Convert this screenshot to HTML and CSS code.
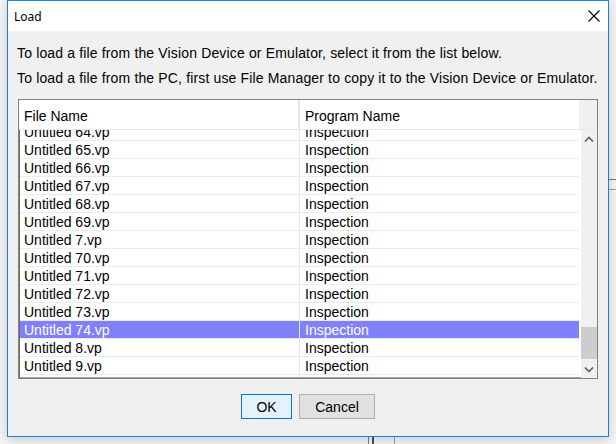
FILE: index.html
```html
<!DOCTYPE html>
<html>
<head>
<meta charset="utf-8">
<link rel="stylesheet" href="styles.css">
</head>
<body>
<div class="desk">
  <div class="bg-hline bg-hline-1"></div>
  <div class="bg-hline bg-hline-2"></div>
  <div class="bg-vline bg-vline-1"></div>
  <div class="bg-vline bg-vline-2"></div>
  <div class="bg-vline bg-vline-3"></div>
  <div class="dialog">
    <div class="titlebar">
      <span class="title">Load</span>
      <svg class="close" width="12" height="12" viewBox="0 0 12 12"><path d="M0.5 0.5 L11.5 11.5 M11.5 0.5 L0.5 11.5" stroke="#000" stroke-width="1.1" fill="none"/></svg>
    </div>
    <div class="content">
      <p class="msg">To load a file from the Vision Device or Emulator, select it from the list below.</p>
      <p class="msg">To load a file from the PC, first use File Manager to copy it to the Vision Device or Emulator.</p>
      <div class="table">
        <div class="thead">
          <div class="th th-file">File Name</div>
          <div class="th th-prog">Program Name</div>
          <div class="corner"></div>
        </div>
        <div class="tbody">
          <div class="viewport">
            <div class="rows">
              <div class="row"><div class="cell c-file">Untitled 64.vp</div><div class="cell c-prog">Inspection</div></div>
              <div class="row"><div class="cell c-file">Untitled 65.vp</div><div class="cell c-prog">Inspection</div></div>
              <div class="row"><div class="cell c-file">Untitled 66.vp</div><div class="cell c-prog">Inspection</div></div>
              <div class="row"><div class="cell c-file">Untitled 67.vp</div><div class="cell c-prog">Inspection</div></div>
              <div class="row"><div class="cell c-file">Untitled 68.vp</div><div class="cell c-prog">Inspection</div></div>
              <div class="row"><div class="cell c-file">Untitled 69.vp</div><div class="cell c-prog">Inspection</div></div>
              <div class="row"><div class="cell c-file">Untitled 7.vp</div><div class="cell c-prog">Inspection</div></div>
              <div class="row"><div class="cell c-file">Untitled 70.vp</div><div class="cell c-prog">Inspection</div></div>
              <div class="row"><div class="cell c-file">Untitled 71.vp</div><div class="cell c-prog">Inspection</div></div>
              <div class="row"><div class="cell c-file">Untitled 72.vp</div><div class="cell c-prog">Inspection</div></div>
              <div class="row"><div class="cell c-file">Untitled 73.vp</div><div class="cell c-prog">Inspection</div></div>
              <div class="row selected"><div class="cell c-file">Untitled 74.vp</div><div class="cell c-prog">Inspection</div></div>
              <div class="row"><div class="cell c-file">Untitled 8.vp</div><div class="cell c-prog">Inspection</div></div>
              <div class="row"><div class="cell c-file">Untitled 9.vp</div><div class="cell c-prog">Inspection</div></div>
              <div class="row filler"><div class="cell c-file"></div><div class="cell c-prog"></div></div>
            </div>
          </div>
          <div class="scrollbar">
            <div class="arrow">
              <svg width="10" height="6" viewBox="0 0 10 6"><path d="M1 5.5 L5 1.5 L9 5.5" stroke="#606060" stroke-width="1.6" fill="none"/></svg>
            </div>
            <div class="track">
              <div class="thumb"></div>
            </div>
            <div class="arrow">
              <svg width="10" height="6" viewBox="0 0 10 6"><path d="M1 0.5 L5 4.5 L9 0.5" stroke="#606060" stroke-width="1.6" fill="none"/></svg>
            </div>
          </div>
        </div>
      </div>
      <div class="buttons">
        <button class="btn btn-ok">OK</button>
        <button class="btn btn-cancel">Cancel</button>
      </div>
    </div>
  </div>
</div>
</body>
</html>
```

FILE: styles.css
```css
html, body {
  margin: 0;
  padding: 0;
}
body {
  width: 616px;
  height: 444px;
  overflow: hidden;
  background: #f0f0f0;
  font-family: "Liberation Sans", Arial, sans-serif;
}
.desk {
  position: relative;
  width: 616px;
  height: 444px;
  background: #f4f4f4;
}
.bg-hline {
  position: absolute;
  left: 608px;
  width: 8px;
  height: 1px;
  background: #707070;
}
.bg-hline-1 { top: 179px; }
.bg-hline-2 { top: 189px; background: #a0a0a0; }
.bg-vline {
  position: absolute;
  top: 437px;
  width: 1px;
  height: 7px;
  background: #808080;
}
.bg-vline-1 { left: 368px; }
.bg-vline-2 { left: 372px; background: #505050; width: 2px; }
.bg-vline-3 { left: 394px; background: #a0a0a0; }

.dialog {
  position: absolute;
  left: 7px;
  top: 0;
  width: 600px;
  height: 435px;
  border: 1px solid #1883d7;
  background: #f0f0f0;
  display: flex;
  flex-direction: column;
  box-shadow: 0 2px 10px rgba(0,0,0,0.18);
}
.titlebar {
  height: 30px;
  background: #fff;
  display: flex;
  align-items: center;
  justify-content: space-between;
  padding: 0 8px 0 6px;
  flex-shrink: 0;
}
.title {
  font-family: "Noto Sans", "Liberation Sans", sans-serif;
  font-size: 12px;
  color: #000;
}
.close {
  display: block;
}
.content {
  flex: 1;
  display: flex;
  flex-direction: column;
  padding: 10px 10px 0 10px;
}
.msg {
  margin: 0 0 0 -1px;
  font-size: 14px;
  line-height: 25px;
  letter-spacing: 0.15px;
  color: #000;
  white-space: nowrap;
}
.table {
  margin-top: 8px;
  width: 578px;
  height: 278px;
  border: 1px solid #828282;
  background: #fff;
  display: flex;
  flex-direction: column;
  font-size: 14px;
}
.thead {
  display: flex;
  height: 29px;
  flex-shrink: 0;
  border-bottom: 1px solid #e8e8e8;
  background: #f0f0f0;
}
.th {
  background: #fff;
  display: flex;
  align-items: center;
  color: #000;
  padding: 3px 0 0 5px;
  box-sizing: border-box;
}
.th-file {
  width: 281px;
  border-right: 2px solid #e5e5e5;
}
.th-prog {
  width: 279px;
}
.corner {
  flex: 1;
  background: #f0f0f0;
}
.tbody {
  flex: 1;
  display: flex;
  min-height: 0;
}
.viewport {
  width: 562px;
  overflow: hidden;
  background: #fff;
  border-left: 1px solid #6e6e6e;
  border-bottom: 1px solid #a0a0a0;
  box-sizing: border-box;
}
.rows {
  margin-top: -7px;
}
.row {
  display: flex;
  height: 17px;
  border-bottom: 1px solid #ececec;
  width: 559px;
}
.cell {
  box-sizing: border-box;
  line-height: 16px;
  padding-top: 1px;
  color: #000;
  white-space: nowrap;
  padding-left: 4px;
}
.c-file {
  width: 280px;
  border-right: 1px solid #e8e8e8;
}
.c-prog {
  width: 279px;
  padding-left: 5px;
}
.row.selected {
  background: #8080ff;
}
.row.selected .cell {
  color: #fff;
}
.row.filler { border-bottom: none; }
.scrollbar {
  width: 16px;
  background: #f0f0f0;
  display: flex;
  flex-direction: column;
}
.arrow {
  height: 17px;
  display: flex;
  align-items: center;
  justify-content: center;
}
.arrow svg { display: block; }
.track {
  flex: 1;
  position: relative;
}
.thumb {
  position: absolute;
  left: 0;
  right: 0;
  top: 180px;
  height: 32px;
  background: #cdcdcd;
}
.buttons {
  display: flex;
  justify-content: center;
  gap: 7px;
  margin-top: 15px;
}
.btn {
  font-family: "Liberation Sans", Arial, sans-serif;
  font-size: 14px;
  height: 25px;
  padding: 0;
  color: #000;
  box-sizing: border-box;
}
.btn-ok {
  width: 51px;
  background: #e5f1fb;
  border: 1px solid #0078d7;
}
.btn-cancel {
  width: 76px;
  background: #e1e1e1;
  border: 1px solid #adadad;
}
```
